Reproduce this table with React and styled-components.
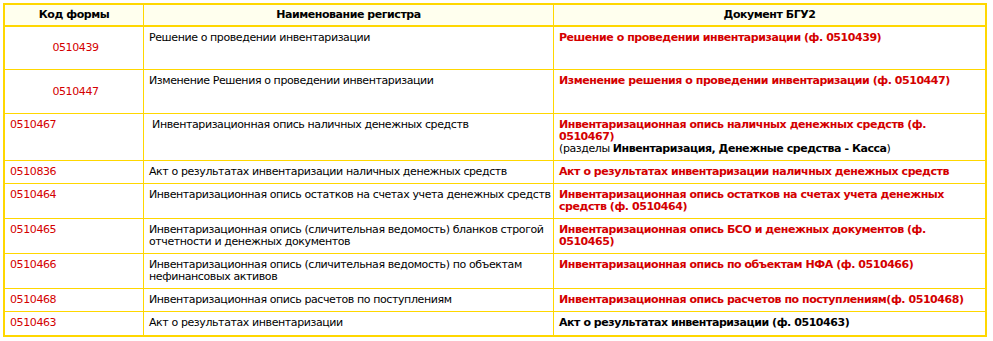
import React from "react";
import styled, { createGlobalStyle } from "styled-components";

const Global = createGlobalStyle`
  html, body { margin: 0; padding: 0; background: #ffffff; }
  body { padding: 3px 0 0 3px; font-family: "DejaVu Sans", Verdana, sans-serif; font-size: 11px; color: #000; }
`;

const Table = styled.table`
  width: 984px;
  border-collapse: separate;
  border-spacing: 0;
  border: 2px solid #ffd700;
  table-layout: fixed;
  font-family: "DejaVu Sans", Verdana, sans-serif;
  font-size: 11px;
  line-height: 12px;
  letter-spacing: -0.4px;
`;

const HeadCell = styled.th`
  background: #ffffee;
  font-weight: bold;
  text-align: center;
  vertical-align: middle;
  height: 20px;
  padding: 0 5px;
  letter-spacing: -0.45px;
  border-bottom: 2px solid #ffd700;
  border-right: ${(p) => (p.$last ? "none" : "1px solid #ffd700")};
  color: #000;
  box-sizing: content-box;
`;

const Cell = styled.td`
  padding: 5px 2px 5px 5px;
  vertical-align: ${(p) => (p.$middle ? "middle" : "top")};
  text-align: ${(p) => (p.$center ? "center" : "left")};
  border-right: ${(p) => (p.$last ? "none" : "1px solid #ffd700")};
  border-bottom: ${(p) => (p.$bottom ? "none" : "1px solid #ffd700")};
  color: ${(p) => (p.$red ? "#d40000" : "#000")};
  font-weight: ${(p) => (p.$bold ? "bold" : "normal")};
  letter-spacing: ${(p) => (p.$bold ? "-0.45px" : "-0.4px")};
`;

const Row = styled.tr`
  height: ${(p) => p.$h}px;
`;

const Note = styled.span`
  color: #000;
  font-weight: normal;
  letter-spacing: -0.4px;
`;

const Strong = styled.b`
  font-weight: bold;
  letter-spacing: -0.45px;
`;

const rows = [
  { code: "0510439", name: "Решение о проведении инвентаризации", doc: "Решение о проведении инвентаризации (ф. 0510439)", center: true, h: 43 },
  { code: "0510447", name: "Изменение Решения о проведении инвентаризации", doc: "Изменение решения о проведении инвентаризации (ф. 0510447)", center: true, h: 44 },
  {
    code: "0510467",
    name: "\u00a0Инвентаризационная опись наличных денежных средств",
    doc: "Инвентаризационная опись наличных денежных средств (ф. 0510467)",
    note: true,
    h: 47,
  },
  { code: "0510836", name: "Акт о результатах инвентаризации наличных денежных средств", doc: "Акт о результатах инвентаризации наличных денежных средств", h: 23 },
  { code: "0510464", name: "Инвентаризационная опись остатков на счетах учета денежных средств", doc: "Инвентаризационная опись остатков на счетах учета денежных средств (ф. 0510464)", h: 35 },
  { code: "0510465", name: "Инвентаризационная опись (сличительная ведомость) бланков строгой отчетности и денежных документов", doc: "Инвентаризационная опись БСО и денежных документов (ф. 0510465)", h: 35 },
  { code: "0510466", name: "Инвентаризационная опись (сличительная ведомость) по объектам нефинансовых активов", doc: "Инвентаризационная опись по объектам НФА (ф. 0510466)", h: 35 },
  { code: "0510468", name: "Инвентаризационная опись расчетов по поступлениям", doc: "Инвентаризационная опись расчетов по поступлениям(ф. 0510468)", h: 23 },
  { code: "0510463", name: "Акт о результатах инвентаризации", doc: "Акт о результатах инвентаризации (ф. 0510463)", black: true, h: 23, bottom: true },
];

export default function App() {
  return (
    <>
      <Global />
      <Table>
        <colgroup>
          <col style={{ width: 139 }} />
          <col style={{ width: 410 }} />
          <col />
        </colgroup>
        <thead>
          <tr>
            <HeadCell>Код формы</HeadCell>
            <HeadCell>Наименование регистра</HeadCell>
            <HeadCell $last>Документ БГУ2</HeadCell>
          </tr>
        </thead>
        <tbody>
          {rows.map((r) => (
            <Row key={r.code} $h={r.h}>
              <Cell $red $center={r.center} $middle={r.center} $bottom={r.bottom}>
                {r.code}
              </Cell>
              <Cell $bottom={r.bottom}>{r.name}</Cell>
              <Cell $last $bold $red={!r.black} $bottom={r.bottom}>
                {r.doc}
                {r.note && (
                  <>
                    <br />
                    <Note>
                      (разделы <Strong>Инвентаризация, Денежные средства - Касса</Strong>)
                    </Note>
                  </>
                )}
              </Cell>
            </Row>
          ))}
        </tbody>
      </Table>
    </>
  );
}
